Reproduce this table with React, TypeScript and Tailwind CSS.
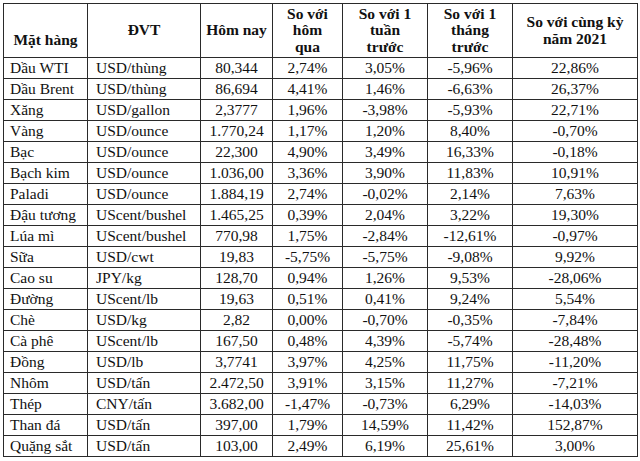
import React from 'react';

type Row = [string, string, string, string, string, string, string];

const rows: Row[] = [
  ['Dầu WTI', 'USD/thùng', '80,344', '2,74%', '3,05%', '-5,96%', '22,86%'],
  ['Dầu Brent', 'USD/thùng', '86,694', '4,41%', '1,46%', '-6,63%', '26,37%'],
  ['Xăng', 'USD/gallon', '2,3777', '1,96%', '-3,98%', '-5,93%', '22,71%'],
  ['Vàng', 'USD/ounce', '1.770,24', '1,17%', '1,20%', '8,40%', '-0,70%'],
  ['Bạc', 'USD/ounce', '22,300', '4,90%', '3,49%', '16,33%', '-0,18%'],
  ['Bạch kim', 'USD/ounce', '1.036,00', '3,36%', '3,90%', '11,83%', '10,91%'],
  ['Paladi', 'USD/ounce', '1.884,19', '2,74%', '-0,02%', '2,14%', '7,63%'],
  ['Đậu tương', 'UScent/bushel', '1.465,25', '0,39%', '2,04%', '3,22%', '19,30%'],
  ['Lúa mì', 'UScent/bushel', '770,98', '1,75%', '-2,84%', '-12,61%', '-0,97%'],
  ['Sữa', 'USD/cwt', '19,83', '-5,75%', '-5,75%', '-9,08%', '9,92%'],
  ['Cao su', 'JPY/kg', '128,70', '0,94%', '1,26%', '9,53%', '-28,06%'],
  ['Đường', 'UScent/lb', '19,63', '0,51%', '0,41%', '9,24%', '5,54%'],
  ['Chè', 'USD/kg', '2,82', '0,00%', '-0,70%', '-0,35%', '-7,84%'],
  ['Cà phê', 'UScent/lb', '167,50', '0,48%', '4,39%', '-5,74%', '-28,48%'],
  ['Đồng', 'USD/lb', '3,7741', '3,97%', '4,25%', '11,75%', '-11,20%'],
  ['Nhôm', 'USD/tấn', '2.472,50', '3,91%', '3,15%', '11,27%', '-7,21%'],
  ['Thép', 'CNY/tấn', '3.682,00', '-1,47%', '-0,73%', '6,29%', '-14,03%'],
  ['Than đá', 'USD/tấn', '397,00', '1,79%', '14,59%', '11,42%', '152,87%'],
  ['Quặng sắt', 'USD/tấn', '103,00', '2,49%', '6,19%', '25,61%', '3,00%'],
];

const th = 'border border-[#2a2a2a] font-bold text-center align-middle leading-[16.5px] p-0';
const td = 'border border-[#2a2a2a] p-0 h-[21px] align-top';
const cell = 'h-[20px] leading-[20px] whitespace-nowrap';

const App: React.FC = () => {
  return (
    <div className="w-[640px] h-[461px] bg-white pt-[3px] pl-[3px] overflow-hidden font-['Liberation_Serif',serif] text-[15.5px] text-[#111]">
      <table className="table-fixed border-collapse w-[634px]">
        <colgroup>
          <col className="w-[84px]" />
          <col className="w-[113px]" />
          <col className="w-[72px]" />
          <col className="w-[70px]" />
          <col className="w-[85px]" />
          <col className="w-[85px]" />
          <col className="w-[125px]" />
        </colgroup>
        <thead>
          <tr className="h-[54px]">
            <th className={th + ' !align-bottom pb-[9px]'}>Mặt hàng</th>
            <th className={th}>ĐVT</th>
            <th className={th}>Hôm nay</th>
            <th className={th}>So với<br />hôm<br />qua</th>
            <th className={th}>So với 1<br />tuần<br />trước</th>
            <th className={th}>So với 1<br />tháng<br />trước</th>
            <th className={th}>So với cùng kỳ<br />năm 2021</th>
          </tr>
        </thead>
        <tbody>
          {rows.map((r) => (
            <tr key={r[0]}>
              <td className={td}><div className={cell + ' pl-[6px]'}>{r[0]}</div></td>
              <td className={td}><div className={cell + ' pl-[8px]'}>{r[1]}</div></td>
              {r.slice(2).map((v, i) => (
                <td key={i} className={td}><div className={cell + ' text-center'}>{v}</div></td>
              ))}
            </tr>
          ))}
        </tbody>
      </table>
    </div>
  );
};

export default App;
